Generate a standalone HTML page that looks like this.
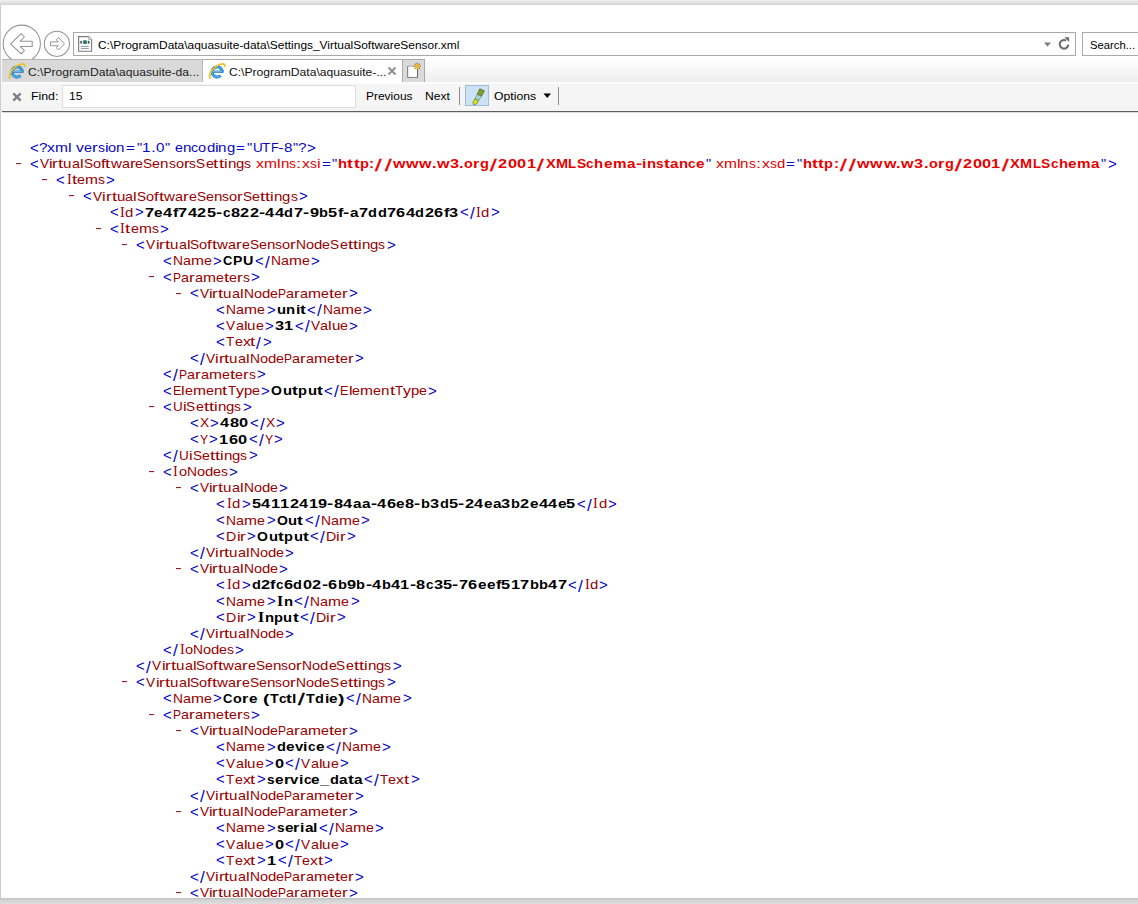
<!DOCTYPE html>
<html><head><meta charset="utf-8"><title>xml</title>
<style>
html,body{margin:0;padding:0;width:1138px;height:904px;overflow:hidden;background:#fff;position:relative}
body{font-family:"Liberation Sans",sans-serif}
#topband{position:absolute;left:0;top:0;width:1138px;height:5px;background:linear-gradient(#f0f0f0,#e2e2e2 50%,#d3d3d3)}
#leftb{position:absolute;left:0;top:5px;width:1px;height:893px;background:#cfcfcf}
#addr{position:absolute;left:73px;top:32px;width:1001px;height:22px;border:1px solid #a9a9a9;background:#fff}
#search{position:absolute;left:1082px;top:32px;width:80px;height:22px;border:1px solid #a9a9a9;background:#fff}
.ui{position:absolute;font-size:11.5px;line-height:0;white-space:pre;color:#000;transform-origin:0 0}
#tabrow{position:absolute;left:1px;top:59px;width:1137px;height:24px;background:linear-gradient(#ffffff 0,#fdfdfd 15%,#eeeeee 95%,#fafafa 100%)}
#tab1{position:absolute;left:2px;top:59px;width:200px;height:22px;background:#d9d9d9;border-top:1px solid #b4b4b4;border-right:1px solid #b8b8b8}
#tab2{position:absolute;left:203px;top:59px;width:199px;height:24px;background:#fff;border-top:1px solid #a9a9a9}
#newtab{position:absolute;left:402px;top:59px;width:21px;height:22px;background:#dadada;border:1px solid #aaaaaa;border-bottom:0}
.ie{position:absolute}
#findbar{position:absolute;left:1px;top:82px;width:1137px;height:27px;background:#f5f5f5;border-top:2px solid #fcfcfc}
#findline{position:absolute;left:2px;top:111px;width:1136px;height:1px;background:#5e5e5e;box-shadow:0 1px 0 #dcdcdc}
#findbox{position:absolute;left:62px;top:85px;width:292px;height:21px;border:1px solid #dcdcdc;background:#fff}
.sep{position:absolute;top:87px;width:1px;height:18px;background:#8a8a8a}
#hlbtn{position:absolute;left:465px;top:85px;width:22px;height:19px;background:#cde2f6;border:1px solid #9fbcd8}
#botbar{position:absolute;left:0;top:898px;width:1138px;height:6px;background:linear-gradient(#c2c2c2,#d4d4d4 40%,#dedede)}
#xml{position:absolute;left:0;top:0}
.ln{position:absolute;height:0;font-size:13.333px;line-height:0;white-space:pre}
.ln span{position:absolute;top:0;transform-origin:0 0}
.m{color:#0808c4}
.n{color:#990000}
.t{color:#000;font-weight:bold}
.av{color:#e80000;font-weight:bold}
.d{position:absolute;width:5px;height:1px;background:#9a1c2a;box-shadow:0 0.5px 0 rgba(180,40,50,0.25)}
.ns{color:#e00000}
.sf{font-family:"Liberation Serif",serif;font-size:13.6px}
.ln span.bs{font-size:16px;top:1.4px;font-weight:normal;-webkit-text-stroke:0.35px currentColor}
.ln span.rs{font-size:16.5px;top:0.2px}
.ln span.ch{font-size:14.5px;top:-0.4px}

</style></head><body>
<div id="topband"></div>
<div id="leftb"></div>
<!-- nav buttons -->
<svg id="nav" width="75" height="59" style="position:absolute;left:0;top:0">
  <circle cx="21.8" cy="43.75" r="18.6" fill="#fff" stroke="#939393" stroke-width="1.05"/>
  <path d="M10.6 43.8 L21.1 33.6 L24.4 37 L20.2 41.2 L32.2 41.2 L32.2 46.4 L20.2 46.4 L24.4 50.6 L21.1 53.9 Z" fill="#fff" stroke="#939393" stroke-width="1.05" stroke-linejoin="round"/>
  <circle cx="56.9" cy="43.8" r="12.6" fill="#fff" stroke="#939393" stroke-width="1.05"/>
  <path d="M64.5 43.8 L58.5 37.6 L56.3 39.8 L58.3 41.9 L50.5 41.9 L50.5 45.7 L58.3 45.7 L56.3 47.8 L58.5 50 Z" fill="#fff" stroke="#939393" stroke-width="1.0" stroke-linejoin="round"/>
</svg>
<div id="addr"></div>
<svg style="position:absolute;left:77px;top:35px" width="16" height="18">
  <path d="M1.6 1.6 H11.6 L14.6 4.6 V16.3 H1.6 Z" fill="#fff" stroke="#7c7c7c" stroke-width="1.1"/>
  <path d="M11.6 1.6 V4.6 H14.6" fill="#e4e4e4" stroke="#a8a8a8" stroke-width="0.8"/>
  <path d="M4.8 6 L3.4 7.3 L4.8 8.6 M10.9 6 L12.3 7.3 L10.9 8.6" fill="none" stroke="#4c4c4c" stroke-width="1.2"/>
  <circle cx="8" cy="7.2" r="2.1" fill="#2e7b6a"/>
  <path d="M4 11.5 H11.8 M4 13.5 H11.8" stroke="#8a8ab0" stroke-width="0.9"/>
</svg>
<div class="ui" style="left:98px;top:44.5px;transform:scaleX(1.038)">C:\ProgramData\aquasuite-data\Settings_VirtualSoftwareSensor.xml</div>
<svg style="position:absolute;left:1040px;top:35px" width="32" height="18">
  <path d="M4 7.5 H11 L7.5 11.5 Z" fill="#7a7a7a"/>
  <path d="M28.28 9.67 A4.3 4.3 0 1 1 26.15 5.58" fill="none" stroke="#6e6e6e" stroke-width="2.1"/>
  <path d="M24.3 2.3 L29.1 2.3 L29.1 7.1 Z" fill="#6e6e6e"/>
</svg>
<div id="search"></div>
<div class="ui" style="left:1090px;top:44.5px;transform:scaleX(0.98)">Search...</div>

<!-- tabs -->
<div id="tabrow"></div>
<div id="tab1"></div>
<div id="tab2"></div>
<div id="newtab"></div>
<svg class="ie" style="left:7px;top:62px" width="20" height="19" viewBox="0 0 20 19">
  <path d="M15.20 10.66 A5.1 5.1 0 1 0 13.56 13.74" fill="none" stroke="#1a72c0" stroke-width="3"/>
  <path d="M15.20 10.66 A5.1 5.1 0 1 0 13.56 13.74" fill="none" stroke="#4fb6ee" stroke-width="1.4"/>
  <path d="M5.4 9.7 H15.6" stroke="#1a72c0" stroke-width="2.2"/>
  <path d="M6 9.7 H15" stroke="#7fd4f8" stroke-width="0.9"/>
  <path d="M3.6 16.6 Q0.6 14.5 5.2 8 Q9.5 2.5 15.6 1.8 Q18.6 1.8 17.4 5.2" fill="none" stroke="#f0c02a" stroke-width="1.8"/>
</svg>
<div class="ui" style="left:28.3px;top:71.5px;color:#222;transform:scaleX(1.054)">C:\ProgramData\aquasuite-da...</div>
<svg class="ie" style="left:207px;top:62px" width="20" height="19" viewBox="0 0 20 19">
  <path d="M15.20 10.66 A5.1 5.1 0 1 0 13.56 13.74" fill="none" stroke="#1a72c0" stroke-width="3"/>
  <path d="M15.20 10.66 A5.1 5.1 0 1 0 13.56 13.74" fill="none" stroke="#4fb6ee" stroke-width="1.4"/>
  <path d="M5.4 9.7 H15.6" stroke="#1a72c0" stroke-width="2.2"/>
  <path d="M6 9.7 H15" stroke="#7fd4f8" stroke-width="0.9"/>
  <path d="M3.6 16.6 Q0.6 14.5 5.2 8 Q9.5 2.5 15.6 1.8 Q18.6 1.8 17.4 5.2" fill="none" stroke="#f0c02a" stroke-width="1.8"/>
</svg>
<div class="ui" style="left:228.5px;top:71.5px;color:#111;transform:scaleX(1.052)">C:\ProgramData\aquasuite-...</div>
<svg style="position:absolute;left:387px;top:66px" width="10" height="10">
  <path d="M1.5 1.5 L8.5 8.5 M8.5 1.5 L1.5 8.5" stroke="#8c8c8c" stroke-width="1.8"/>
</svg>
<svg style="position:absolute;left:404px;top:62px" width="18" height="18">
  <path d="M3.8 4.2 V15.3 H13.5 V7" fill="#fff" stroke="#6a6a6a" stroke-width="1.1"/>
  <path d="M3.8 4.2 H10" fill="none" stroke="#a0a0a0" stroke-width="0.9"/>
  <rect x="4.4" y="4.8" width="8.5" height="10" fill="#fff"/>
  <g fill="#8a6a2a"><circle cx="13.3" cy="1.3" r="0.7"/><circle cx="15.4" cy="2.2" r="0.7"/><circle cx="16.3" cy="4.3" r="0.7"/><circle cx="15.4" cy="6.4" r="0.7"/><circle cx="13.3" cy="7.3" r="0.7"/><circle cx="11.2" cy="6.4" r="0.7"/><circle cx="10.3" cy="4.3" r="0.7"/><circle cx="11.2" cy="2.2" r="0.7"/></g>
  <circle cx="13.3" cy="4.3" r="2.3" fill="#f2b41c"/>
</svg>

<!-- find bar -->
<div id="findbar"></div>
<svg style="position:absolute;left:11.5px;top:92px" width="10" height="10">
  <path d="M1.3 1.3 L8.7 8.7 M8.7 1.3 L1.3 8.7" stroke="#808080" stroke-width="2.4"/>
</svg>
<div class="ui" style="left:31.2px;top:96px;transform:scaleX(1.07)">Find:</div>
<div id="findbox"></div>
<div class="ui" style="left:68.5px;top:96px;transform:scaleX(1.05)">15</div>
<div class="ui" style="left:366.3px;top:96px;transform:scaleX(1.04)">Previous</div>
<div class="ui" style="left:425.4px;top:96px;transform:scaleX(1.05)">Next</div>
<div class="sep" style="left:459px"></div>
<div id="hlbtn"></div>
<svg style="position:absolute;left:462px;top:82px" width="30" height="26">
  <path d="M17.8 6.8 L22.3 8.8 L19.6 14.2 L15.2 12.4 Z" fill="#7f9e2a" stroke="#52701a" stroke-width="0.8"/>
  <path d="M15.2 12.4 L19.6 14.2 L16.6 18.6 L12.8 17 Z" fill="#a9d6c8" stroke="#4e7a6a" stroke-width="0.6"/>
  <path d="M12.8 17 L16.6 18.6 L14.6 22 L11.6 22.8 L10.8 20.5 Z" fill="#d6e22a" stroke="#6a7a10" stroke-width="0.7"/>
</svg>
<div class="ui" style="left:494.4px;top:96px;transform:scaleX(1.065)">Options</div>
<svg style="position:absolute;left:542px;top:92px" width="10" height="7">
  <path d="M1.5 1.5 H9 L5.25 6 Z" fill="#000"/>
</svg>
<div class="sep" style="left:558px"></div>
<div id="findline"></div>
<div id="botbar"></div>

<div id="xml">
<div class="ln" style="left:28.56px;top:148.0px"><span class="m ch" style="left:1.22px;transform:scaleX(1.0299)">&lt;</span><span class="m" style="left:10.55px;transform:scaleX(1.1500)">?</span><span class="m" style="left:18.45px;transform:scaleX(1.1830)">x</span><span class="m" style="left:26.35px;transform:scaleX(1.1678)">m</span><span class="m" style="left:39.32px;transform:scaleX(1.2306)">l</span><span class="m" style="left:47.67px;transform:scaleX(1.1830)">v</span><span class="m" style="left:55.56px;transform:scaleX(1.0707)">e</span><span class="m" style="left:63.51px;transform:scaleX(1.2785)">r</span><span class="m" style="left:69.20px;transform:scaleX(1.0412)">s</span><span class="m" style="left:76.14px;transform:scaleX(1.2306)">i</span><span class="m" style="left:79.80px;transform:scaleX(1.0904)">o</span><span class="m" style="left:87.89px;transform:scaleX(1.1372)">n</span><span class="m" style="left:97.47px;transform:scaleX(1.1400)">=</span><span class="m" style="left:108.03px;transform:scaleX(1.1000)">"</span><span class="m" style="left:113.77px;transform:scaleX(1.1425)">1</span><span class="m" style="left:122.25px;transform:scaleX(1.3106)">.</span><span class="m" style="left:127.10px;transform:scaleX(1.1425)">0</span><span class="m" style="left:136.11px;transform:scaleX(1.1000)">"</span><span class="m" style="left:146.54px;transform:scaleX(1.0707)">e</span><span class="m" style="left:154.49px;transform:scaleX(1.1372)">n</span><span class="m" style="left:162.93px;transform:scaleX(1.0412)">c</span><span class="m" style="left:169.88px;transform:scaleX(1.0904)">o</span><span class="m" style="left:177.97px;transform:scaleX(1.1192)">d</span><span class="m" style="left:186.28px;transform:scaleX(1.2306)">i</span><span class="m" style="left:189.93px;transform:scaleX(1.1372)">n</span><span class="m" style="left:198.37px;transform:scaleX(1.1192)">g</span><span class="m" style="left:207.82px;transform:scaleX(1.1400)">=</span><span class="m" style="left:218.38px;transform:scaleX(1.1000)">"</span><span class="m" style="left:224.11px;transform:scaleX(1.0124)">U</span><span class="m" style="left:233.87px;transform:scaleX(1.0070)">T</span><span class="m" style="left:242.09px;transform:scaleX(0.9400)">F</span><span class="m" style="left:249.75px;transform:scaleX(1.2904)">-</span><span class="m" style="left:255.50px;transform:scaleX(1.1425)">8</span><span class="m" style="left:264.51px;transform:scaleX(1.1000)">"</span><span class="m" style="left:269.62px;transform:scaleX(1.1500)">?</span><span class="m ch" style="left:278.75px;transform:scaleX(1.0299)">&gt;</span></div>
<i class="d" style="left:15.8px;top:163px"></i>
<div class="ln" style="left:28.56px;top:164.2px"><span class="m ch" style="left:1.22px;transform:scaleX(1.0299)">&lt;</span><span class="n" style="left:11.17px;transform:scaleX(1.0258)">V</span><span class="n" style="left:20.29px;transform:scaleX(1.2306)">i</span><span class="n" style="left:23.95px;transform:scaleX(1.2785)">r</span><span class="n" style="left:29.67px;transform:scaleX(1.4000)">t</span><span class="n" style="left:34.89px;transform:scaleX(1.1372)">u</span><span class="n" style="left:43.33px;transform:scaleX(1.0779)">a</span><span class="n" style="left:51.33px;transform:scaleX(1.2306)">l</span><span class="n" style="left:54.99px;transform:scaleX(1.0243)">S</span><span class="n" style="left:64.09px;transform:scaleX(1.0904)">o</span><span class="n" style="left:72.18px;transform:scaleX(1.2674)">f</span><span class="n" style="left:76.91px;transform:scaleX(1.4000)">t</span><span class="n" style="left:82.13px;transform:scaleX(1.1313)">w</span><span class="n" style="left:93.04px;transform:scaleX(1.0779)">a</span><span class="n" style="left:101.04px;transform:scaleX(1.2785)">r</span><span class="n" style="left:106.73px;transform:scaleX(1.0707)">e</span><span class="n" style="left:114.68px;transform:scaleX(1.0243)">S</span><span class="n" style="left:123.78px;transform:scaleX(1.0707)">e</span><span class="n" style="left:131.73px;transform:scaleX(1.1372)">n</span><span class="n" style="left:140.17px;transform:scaleX(1.0412)">s</span><span class="n" style="left:147.12px;transform:scaleX(1.0904)">o</span><span class="n" style="left:155.21px;transform:scaleX(1.2785)">r</span><span class="n" style="left:160.90px;transform:scaleX(1.0412)">s</span><span class="n" style="left:167.85px;transform:scaleX(1.0243)">S</span><span class="n" style="left:176.96px;transform:scaleX(1.0707)">e</span><span class="n" style="left:184.94px;transform:scaleX(1.4000)">t</span><span class="n" style="left:190.19px;transform:scaleX(1.4000)">t</span><span class="n" style="left:195.41px;transform:scaleX(1.2306)">i</span><span class="n" style="left:199.06px;transform:scaleX(1.1372)">n</span><span class="n" style="left:207.50px;transform:scaleX(1.1192)">g</span><span class="n" style="left:215.81px;transform:scaleX(1.0412)">s</span><span class="ns" style="left:227.45px;transform:scaleX(1.1830)">x</span><span class="ns" style="left:235.34px;transform:scaleX(1.1678)">m</span><span class="ns" style="left:248.31px;transform:scaleX(1.2306)">l</span><span class="ns" style="left:251.97px;transform:scaleX(1.1372)">n</span><span class="ns" style="left:260.41px;transform:scaleX(1.0412)">s</span><span class="ns" style="left:267.79px;transform:scaleX(1.4000)">:</span><span class="ns" style="left:273.41px;transform:scaleX(1.1830)">x</span><span class="ns" style="left:281.30px;transform:scaleX(1.0412)">s</span><span class="ns" style="left:288.25px;transform:scaleX(1.2306)">i</span><span class="m" style="left:293.04px;transform:scaleX(1.1400)">=</span><span class="m" style="left:303.60px;transform:scaleX(1.1000)">"</span><span class="av" style="left:309.53px;transform:scaleX(1.1173)">h</span><span class="av" style="left:318.95px;transform:scaleX(1.3107)">t</span><span class="av" style="left:325.03px;transform:scaleX(1.3107)">t</span><span class="av" style="left:331.18px;transform:scaleX(1.0969)">p</span><span class="av" style="left:340.42px;transform:scaleX(1.1497)">:</span><span class="av bs" style="left:346.94px;transform:scaleX(1.4852)">/</span><span class="av bs" style="left:356.12px;transform:scaleX(1.4852)">/</span><span class="av" style="left:364.28px;transform:scaleX(1.2078)">w</span><span class="av" style="left:377.33px;transform:scaleX(1.2078)">w</span><span class="av" style="left:390.38px;transform:scaleX(1.2078)">w</span><span class="av" style="left:403.27px;transform:scaleX(1.2547)">.</span><span class="av" style="left:408.28px;transform:scaleX(1.2078)">w</span><span class="av" style="left:421.26px;transform:scaleX(1.2262)">3</span><span class="av" style="left:430.65px;transform:scaleX(1.2547)">.</span><span class="av" style="left:435.57px;transform:scaleX(1.0781)">o</span><span class="av" style="left:444.68px;transform:scaleX(1.2263)">r</span><span class="av" style="left:451.36px;transform:scaleX(1.0969)">g</span><span class="av bs" style="left:461.79px;transform:scaleX(1.4852)">/</span><span class="av" style="left:469.87px;transform:scaleX(1.2262)">2</span><span class="av" style="left:479.35px;transform:scaleX(1.2262)">0</span><span class="av" style="left:488.83px;transform:scaleX(1.2262)">0</span><span class="av" style="left:498.31px;transform:scaleX(1.2262)">1</span><span class="av bs" style="left:508.89px;transform:scaleX(1.4852)">/</span><span class="av" style="left:516.99px;transform:scaleX(1.0999)">X</span><span class="av" style="left:527.23px;transform:scaleX(1.0899)">M</span><span class="av" style="left:539.76px;transform:scaleX(0.9997)">L</span><span class="av" style="left:548.27px;transform:scaleX(1.0409)">S</span><span class="av" style="left:557.88px;transform:scaleX(1.0141)">c</span><span class="av" style="left:565.75px;transform:scaleX(1.1173)">h</span><span class="av" style="left:575.23px;transform:scaleX(1.1451)">e</span><span class="av" style="left:584.19px;transform:scaleX(1.1419)">m</span><span class="av" style="left:598.19px;transform:scaleX(1.1520)">a</span><span class="av" style="left:607.05px;transform:scaleX(1.3797)">-</span><span class="av" style="left:613.41px;transform:scaleX(1.1821)">i</span><span class="av" style="left:618.07px;transform:scaleX(1.1173)">n</span><span class="av" style="left:627.53px;transform:scaleX(1.0227)">s</span><span class="av" style="left:635.40px;transform:scaleX(1.3107)">t</span><span class="av" style="left:641.54px;transform:scaleX(1.1520)">a</span><span class="av" style="left:650.45px;transform:scaleX(1.1173)">n</span><span class="av" style="left:659.91px;transform:scaleX(1.0141)">c</span><span class="av" style="left:667.77px;transform:scaleX(1.1451)">e</span><span class="m" style="left:676.98px;transform:scaleX(1.1000)">"</span><span class="ns" style="left:687.41px;transform:scaleX(1.1830)">x</span><span class="ns" style="left:695.30px;transform:scaleX(1.1678)">m</span><span class="ns" style="left:708.28px;transform:scaleX(1.2306)">l</span><span class="ns" style="left:711.93px;transform:scaleX(1.1372)">n</span><span class="ns" style="left:720.37px;transform:scaleX(1.0412)">s</span><span class="ns" style="left:727.75px;transform:scaleX(1.4000)">:</span><span class="ns" style="left:733.37px;transform:scaleX(1.1830)">x</span><span class="ns" style="left:741.26px;transform:scaleX(1.0412)">s</span><span class="ns" style="left:748.21px;transform:scaleX(1.1192)">d</span><span class="m" style="left:757.66px;transform:scaleX(1.1400)">=</span><span class="m" style="left:768.22px;transform:scaleX(1.1000)">"</span><span class="av" style="left:774.14px;transform:scaleX(1.1173)">h</span><span class="av" style="left:783.57px;transform:scaleX(1.3107)">t</span><span class="av" style="left:789.65px;transform:scaleX(1.3107)">t</span><span class="av" style="left:795.79px;transform:scaleX(1.0969)">p</span><span class="av" style="left:805.03px;transform:scaleX(1.1497)">:</span><span class="av bs" style="left:811.55px;transform:scaleX(1.4852)">/</span><span class="av bs" style="left:820.74px;transform:scaleX(1.4852)">/</span><span class="av" style="left:828.89px;transform:scaleX(1.2078)">w</span><span class="av" style="left:841.95px;transform:scaleX(1.2078)">w</span><span class="av" style="left:855.00px;transform:scaleX(1.2078)">w</span><span class="av" style="left:867.89px;transform:scaleX(1.2547)">.</span><span class="av" style="left:872.89px;transform:scaleX(1.2078)">w</span><span class="av" style="left:885.87px;transform:scaleX(1.2262)">3</span><span class="av" style="left:895.26px;transform:scaleX(1.2547)">.</span><span class="av" style="left:900.19px;transform:scaleX(1.0781)">o</span><span class="av" style="left:909.30px;transform:scaleX(1.2263)">r</span><span class="av" style="left:915.98px;transform:scaleX(1.0969)">g</span><span class="av bs" style="left:926.40px;transform:scaleX(1.4852)">/</span><span class="av" style="left:934.49px;transform:scaleX(1.2262)">2</span><span class="av" style="left:943.97px;transform:scaleX(1.2262)">0</span><span class="av" style="left:953.45px;transform:scaleX(1.2262)">0</span><span class="av" style="left:962.93px;transform:scaleX(1.2262)">1</span><span class="av bs" style="left:973.51px;transform:scaleX(1.4852)">/</span><span class="av" style="left:981.61px;transform:scaleX(1.0999)">X</span><span class="av" style="left:991.84px;transform:scaleX(1.0899)">M</span><span class="av" style="left:1004.37px;transform:scaleX(0.9997)">L</span><span class="av" style="left:1012.89px;transform:scaleX(1.0409)">S</span><span class="av" style="left:1022.49px;transform:scaleX(1.0141)">c</span><span class="av" style="left:1030.36px;transform:scaleX(1.1173)">h</span><span class="av" style="left:1039.84px;transform:scaleX(1.1451)">e</span><span class="av" style="left:1048.80px;transform:scaleX(1.1419)">m</span><span class="av" style="left:1062.80px;transform:scaleX(1.1520)">a</span><span class="m" style="left:1072.06px;transform:scaleX(1.1000)">"</span><span class="m ch" style="left:1079.02px;transform:scaleX(1.0299)">&gt;</span></div>
<i class="d" style="left:42.4px;top:179px"></i>
<div class="ln" style="left:55.23px;top:180.4px"><span class="m ch" style="left:1.22px;transform:scaleX(1.0299)">&lt;</span><span class="n sf" style="left:11.59px;transform:scaleX(1.0504)">I</span><span class="n" style="left:16.82px;transform:scaleX(1.4000)">t</span><span class="n" style="left:22.04px;transform:scaleX(1.0707)">e</span><span class="n" style="left:29.99px;transform:scaleX(1.1678)">m</span><span class="n" style="left:42.96px;transform:scaleX(1.0412)">s</span><span class="m ch" style="left:51.13px;transform:scaleX(1.0299)">&gt;</span></div>
<i class="d" style="left:69.1px;top:195px"></i>
<div class="ln" style="left:81.89px;top:196.6px"><span class="m ch" style="left:1.22px;transform:scaleX(1.0299)">&lt;</span><span class="n" style="left:11.17px;transform:scaleX(1.0258)">V</span><span class="n" style="left:20.29px;transform:scaleX(1.2306)">i</span><span class="n" style="left:23.95px;transform:scaleX(1.2785)">r</span><span class="n" style="left:29.67px;transform:scaleX(1.4000)">t</span><span class="n" style="left:34.89px;transform:scaleX(1.1372)">u</span><span class="n" style="left:43.33px;transform:scaleX(1.0779)">a</span><span class="n" style="left:51.33px;transform:scaleX(1.2306)">l</span><span class="n" style="left:54.99px;transform:scaleX(1.0243)">S</span><span class="n" style="left:64.09px;transform:scaleX(1.0904)">o</span><span class="n" style="left:72.18px;transform:scaleX(1.2674)">f</span><span class="n" style="left:76.91px;transform:scaleX(1.4000)">t</span><span class="n" style="left:82.13px;transform:scaleX(1.1313)">w</span><span class="n" style="left:93.04px;transform:scaleX(1.0779)">a</span><span class="n" style="left:101.04px;transform:scaleX(1.2785)">r</span><span class="n" style="left:106.73px;transform:scaleX(1.0707)">e</span><span class="n" style="left:114.68px;transform:scaleX(1.0243)">S</span><span class="n" style="left:123.78px;transform:scaleX(1.0707)">e</span><span class="n" style="left:131.73px;transform:scaleX(1.1372)">n</span><span class="n" style="left:140.17px;transform:scaleX(1.0412)">s</span><span class="n" style="left:147.12px;transform:scaleX(1.0904)">o</span><span class="n" style="left:155.21px;transform:scaleX(1.2785)">r</span><span class="n" style="left:160.90px;transform:scaleX(1.0243)">S</span><span class="n" style="left:170.01px;transform:scaleX(1.0707)">e</span><span class="n" style="left:177.99px;transform:scaleX(1.4000)">t</span><span class="n" style="left:183.24px;transform:scaleX(1.4000)">t</span><span class="n" style="left:188.46px;transform:scaleX(1.2306)">i</span><span class="n" style="left:192.12px;transform:scaleX(1.1372)">n</span><span class="n" style="left:200.55px;transform:scaleX(1.1192)">g</span><span class="n" style="left:208.86px;transform:scaleX(1.0412)">s</span><span class="m ch" style="left:217.03px;transform:scaleX(1.0299)">&gt;</span></div>
<div class="ln" style="left:108.56px;top:212.8px"><span class="m ch" style="left:1.22px;transform:scaleX(1.0299)">&lt;</span><span class="n sf" style="left:11.59px;transform:scaleX(1.0504)">I</span><span class="n" style="left:16.79px;transform:scaleX(1.1192)">d</span><span class="m ch" style="left:26.31px;transform:scaleX(1.0299)">&gt;</span><span class="t" style="left:36.46px;transform:scaleX(1.2262)">7</span><span class="t" style="left:45.92px;transform:scaleX(1.1451)">e</span><span class="t" style="left:54.79px;transform:scaleX(1.2262)">4</span><span class="t" style="left:64.19px;transform:scaleX(1.2130)">f</span><span class="t" style="left:69.89px;transform:scaleX(1.2262)">7</span><span class="t" style="left:79.37px;transform:scaleX(1.2262)">4</span><span class="t" style="left:88.85px;transform:scaleX(1.2262)">2</span><span class="t" style="left:98.33px;transform:scaleX(1.2262)">5</span><span class="t" style="left:107.75px;transform:scaleX(1.3797)">-</span><span class="t" style="left:114.18px;transform:scaleX(1.0141)">c</span><span class="t" style="left:122.05px;transform:scaleX(1.2262)">8</span><span class="t" style="left:131.53px;transform:scaleX(1.2262)">2</span><span class="t" style="left:141.01px;transform:scaleX(1.2262)">2</span><span class="t" style="left:150.43px;transform:scaleX(1.3797)">-</span><span class="t" style="left:156.89px;transform:scaleX(1.2262)">4</span><span class="t" style="left:166.37px;transform:scaleX(1.2262)">4</span><span class="t" style="left:175.85px;transform:scaleX(1.0969)">d</span><span class="t" style="left:185.17px;transform:scaleX(1.2262)">7</span><span class="t" style="left:194.59px;transform:scaleX(1.3797)">-</span><span class="t" style="left:201.05px;transform:scaleX(1.2262)">9</span><span class="t" style="left:210.53px;transform:scaleX(1.0969)">b</span><span class="t" style="left:219.85px;transform:scaleX(1.2262)">5</span><span class="t" style="left:229.25px;transform:scaleX(1.2130)">f</span><span class="t" style="left:234.90px;transform:scaleX(1.3797)">-</span><span class="t" style="left:241.35px;transform:scaleX(1.1520)">a</span><span class="t" style="left:250.26px;transform:scaleX(1.2262)">7</span><span class="t" style="left:259.74px;transform:scaleX(1.0969)">d</span><span class="t" style="left:269.06px;transform:scaleX(1.0969)">d</span><span class="t" style="left:278.38px;transform:scaleX(1.2262)">7</span><span class="t" style="left:287.86px;transform:scaleX(1.2262)">6</span><span class="t" style="left:297.34px;transform:scaleX(1.2262)">4</span><span class="t" style="left:306.82px;transform:scaleX(1.0969)">d</span><span class="t" style="left:316.14px;transform:scaleX(1.2262)">2</span><span class="t" style="left:325.62px;transform:scaleX(1.2262)">6</span><span class="t" style="left:335.02px;transform:scaleX(1.2130)">f</span><span class="t" style="left:340.73px;transform:scaleX(1.2262)">3</span><span class="m ch" style="left:351.24px;transform:scaleX(1.0299)">&lt;</span><span class="m rs" style="left:361.22px;transform:scaleX(1.0474)">/</span><span class="n sf" style="left:367.67px;transform:scaleX(1.0504)">I</span><span class="n" style="left:372.86px;transform:scaleX(1.1192)">d</span><span class="m ch" style="left:382.38px;transform:scaleX(1.0299)">&gt;</span></div>
<i class="d" style="left:95.8px;top:228px"></i>
<div class="ln" style="left:108.56px;top:229.0px"><span class="m ch" style="left:1.22px;transform:scaleX(1.0299)">&lt;</span><span class="n sf" style="left:11.59px;transform:scaleX(1.0504)">I</span><span class="n" style="left:16.82px;transform:scaleX(1.4000)">t</span><span class="n" style="left:22.04px;transform:scaleX(1.0707)">e</span><span class="n" style="left:29.99px;transform:scaleX(1.1678)">m</span><span class="n" style="left:42.96px;transform:scaleX(1.0412)">s</span><span class="m ch" style="left:51.13px;transform:scaleX(1.0299)">&gt;</span></div>
<i class="d" style="left:122.4px;top:244px"></i>
<div class="ln" style="left:135.23px;top:245.2px"><span class="m ch" style="left:1.22px;transform:scaleX(1.0299)">&lt;</span><span class="n" style="left:11.17px;transform:scaleX(1.0258)">V</span><span class="n" style="left:20.29px;transform:scaleX(1.2306)">i</span><span class="n" style="left:23.95px;transform:scaleX(1.2785)">r</span><span class="n" style="left:29.67px;transform:scaleX(1.4000)">t</span><span class="n" style="left:34.89px;transform:scaleX(1.1372)">u</span><span class="n" style="left:43.33px;transform:scaleX(1.0779)">a</span><span class="n" style="left:51.33px;transform:scaleX(1.2306)">l</span><span class="n" style="left:54.99px;transform:scaleX(1.0243)">S</span><span class="n" style="left:64.09px;transform:scaleX(1.0904)">o</span><span class="n" style="left:72.18px;transform:scaleX(1.2674)">f</span><span class="n" style="left:76.91px;transform:scaleX(1.4000)">t</span><span class="n" style="left:82.13px;transform:scaleX(1.1313)">w</span><span class="n" style="left:93.04px;transform:scaleX(1.0779)">a</span><span class="n" style="left:101.04px;transform:scaleX(1.2785)">r</span><span class="n" style="left:106.73px;transform:scaleX(1.0707)">e</span><span class="n" style="left:114.68px;transform:scaleX(1.0243)">S</span><span class="n" style="left:123.78px;transform:scaleX(1.0707)">e</span><span class="n" style="left:131.73px;transform:scaleX(1.1372)">n</span><span class="n" style="left:140.17px;transform:scaleX(1.0412)">s</span><span class="n" style="left:147.12px;transform:scaleX(1.0904)">o</span><span class="n" style="left:155.21px;transform:scaleX(1.2785)">r</span><span class="n" style="left:160.90px;transform:scaleX(1.0345)">N</span><span class="n" style="left:170.88px;transform:scaleX(1.0904)">o</span><span class="n" style="left:178.97px;transform:scaleX(1.1192)">d</span><span class="n" style="left:187.28px;transform:scaleX(1.0707)">e</span><span class="n" style="left:195.22px;transform:scaleX(1.0243)">S</span><span class="n" style="left:204.33px;transform:scaleX(1.0707)">e</span><span class="n" style="left:212.31px;transform:scaleX(1.4000)">t</span><span class="n" style="left:217.56px;transform:scaleX(1.4000)">t</span><span class="n" style="left:222.78px;transform:scaleX(1.2306)">i</span><span class="n" style="left:226.43px;transform:scaleX(1.1372)">n</span><span class="n" style="left:234.87px;transform:scaleX(1.1192)">g</span><span class="n" style="left:243.18px;transform:scaleX(1.0412)">s</span><span class="m ch" style="left:251.35px;transform:scaleX(1.0299)">&gt;</span></div>
<div class="ln" style="left:161.90px;top:261.4px"><span class="m ch" style="left:1.22px;transform:scaleX(1.0299)">&lt;</span><span class="n" style="left:11.17px;transform:scaleX(1.0345)">N</span><span class="n" style="left:21.15px;transform:scaleX(1.0779)">a</span><span class="n" style="left:29.15px;transform:scaleX(1.1678)">m</span><span class="n" style="left:42.12px;transform:scaleX(1.0707)">e</span><span class="m ch" style="left:51.29px;transform:scaleX(1.0299)">&gt;</span><span class="t" style="left:61.43px;transform:scaleX(0.9745)">C</span><span class="t" style="left:71.22px;transform:scaleX(1.0553)">P</span><span class="t" style="left:81.01px;transform:scaleX(1.0781)">U</span><span class="m ch" style="left:92.84px;transform:scaleX(1.0299)">&lt;</span><span class="m rs" style="left:102.82px;transform:scaleX(1.0474)">/</span><span class="n" style="left:108.85px;transform:scaleX(1.0345)">N</span><span class="n" style="left:118.82px;transform:scaleX(1.0779)">a</span><span class="n" style="left:126.82px;transform:scaleX(1.1678)">m</span><span class="n" style="left:139.80px;transform:scaleX(1.0707)">e</span><span class="m ch" style="left:148.96px;transform:scaleX(1.0299)">&gt;</span></div>
<i class="d" style="left:149.1px;top:276px"></i>
<div class="ln" style="left:161.90px;top:277.6px"><span class="m ch" style="left:1.22px;transform:scaleX(1.0299)">&lt;</span><span class="n" style="left:11.17px;transform:scaleX(0.9043)">P</span><span class="n" style="left:19.21px;transform:scaleX(1.0779)">a</span><span class="n" style="left:27.21px;transform:scaleX(1.2785)">r</span><span class="n" style="left:32.91px;transform:scaleX(1.0779)">a</span><span class="n" style="left:40.91px;transform:scaleX(1.1678)">m</span><span class="n" style="left:53.88px;transform:scaleX(1.0707)">e</span><span class="n" style="left:61.86px;transform:scaleX(1.4000)">t</span><span class="n" style="left:67.08px;transform:scaleX(1.0707)">e</span><span class="n" style="left:75.02px;transform:scaleX(1.2785)">r</span><span class="n" style="left:80.72px;transform:scaleX(1.0412)">s</span><span class="m ch" style="left:88.88px;transform:scaleX(1.0299)">&gt;</span></div>
<i class="d" style="left:175.8px;top:293px"></i>
<div class="ln" style="left:188.56px;top:293.8px"><span class="m ch" style="left:1.22px;transform:scaleX(1.0299)">&lt;</span><span class="n" style="left:11.17px;transform:scaleX(1.0258)">V</span><span class="n" style="left:20.29px;transform:scaleX(1.2306)">i</span><span class="n" style="left:23.95px;transform:scaleX(1.2785)">r</span><span class="n" style="left:29.67px;transform:scaleX(1.4000)">t</span><span class="n" style="left:34.89px;transform:scaleX(1.1372)">u</span><span class="n" style="left:43.33px;transform:scaleX(1.0779)">a</span><span class="n" style="left:51.33px;transform:scaleX(1.2306)">l</span><span class="n" style="left:54.99px;transform:scaleX(1.0345)">N</span><span class="n" style="left:64.96px;transform:scaleX(1.0904)">o</span><span class="n" style="left:73.05px;transform:scaleX(1.1192)">d</span><span class="n" style="left:81.36px;transform:scaleX(1.0707)">e</span><span class="n" style="left:89.30px;transform:scaleX(0.9043)">P</span><span class="n" style="left:97.34px;transform:scaleX(1.0779)">a</span><span class="n" style="left:105.34px;transform:scaleX(1.2785)">r</span><span class="n" style="left:111.04px;transform:scaleX(1.0779)">a</span><span class="n" style="left:119.04px;transform:scaleX(1.1678)">m</span><span class="n" style="left:132.01px;transform:scaleX(1.0707)">e</span><span class="n" style="left:139.99px;transform:scaleX(1.4000)">t</span><span class="n" style="left:145.21px;transform:scaleX(1.0707)">e</span><span class="n" style="left:153.16px;transform:scaleX(1.2785)">r</span><span class="m ch" style="left:160.07px;transform:scaleX(1.0299)">&gt;</span></div>
<div class="ln" style="left:215.23px;top:310.0px"><span class="m ch" style="left:1.22px;transform:scaleX(1.0299)">&lt;</span><span class="n" style="left:11.17px;transform:scaleX(1.0345)">N</span><span class="n" style="left:21.15px;transform:scaleX(1.0779)">a</span><span class="n" style="left:29.15px;transform:scaleX(1.1678)">m</span><span class="n" style="left:42.12px;transform:scaleX(1.0707)">e</span><span class="m ch" style="left:51.29px;transform:scaleX(1.0299)">&gt;</span><span class="t" style="left:61.43px;transform:scaleX(1.1173)">u</span><span class="t" style="left:70.92px;transform:scaleX(1.1173)">n</span><span class="t" style="left:80.32px;transform:scaleX(1.1821)">i</span><span class="t" style="left:84.91px;transform:scaleX(1.3107)">t</span><span class="m ch" style="left:92.08px;transform:scaleX(1.0299)">&lt;</span><span class="m rs" style="left:102.06px;transform:scaleX(1.0474)">/</span><span class="n" style="left:108.09px;transform:scaleX(1.0345)">N</span><span class="n" style="left:118.06px;transform:scaleX(1.0779)">a</span><span class="n" style="left:126.06px;transform:scaleX(1.1678)">m</span><span class="n" style="left:139.04px;transform:scaleX(1.0707)">e</span><span class="m ch" style="left:148.20px;transform:scaleX(1.0299)">&gt;</span></div>
<div class="ln" style="left:215.23px;top:326.2px"><span class="m ch" style="left:1.22px;transform:scaleX(1.0299)">&lt;</span><span class="n" style="left:11.17px;transform:scaleX(1.0258)">V</span><span class="n" style="left:20.29px;transform:scaleX(1.0779)">a</span><span class="n" style="left:28.29px;transform:scaleX(1.2306)">l</span><span class="n" style="left:31.95px;transform:scaleX(1.1372)">u</span><span class="n" style="left:40.39px;transform:scaleX(1.0707)">e</span><span class="m ch" style="left:49.55px;transform:scaleX(1.0299)">&gt;</span><span class="t" style="left:59.69px;transform:scaleX(1.2262)">3</span><span class="t" style="left:69.17px;transform:scaleX(1.2262)">1</span><span class="m ch" style="left:79.68px;transform:scaleX(1.0299)">&lt;</span><span class="m rs" style="left:89.66px;transform:scaleX(1.0474)">/</span><span class="n" style="left:95.69px;transform:scaleX(1.0258)">V</span><span class="n" style="left:104.81px;transform:scaleX(1.0779)">a</span><span class="n" style="left:112.81px;transform:scaleX(1.2306)">l</span><span class="n" style="left:116.46px;transform:scaleX(1.1372)">u</span><span class="n" style="left:124.90px;transform:scaleX(1.0707)">e</span><span class="m ch" style="left:134.07px;transform:scaleX(1.0299)">&gt;</span></div>
<div class="ln" style="left:215.23px;top:342.4px"><span class="m ch" style="left:1.22px;transform:scaleX(1.0299)">&lt;</span><span class="n" style="left:11.17px;transform:scaleX(1.0070)">T</span><span class="n" style="left:19.39px;transform:scaleX(1.0707)">e</span><span class="n" style="left:27.33px;transform:scaleX(1.1830)">x</span><span class="n" style="left:35.26px;transform:scaleX(1.4000)">t</span><span class="m rs" style="left:40.51px;transform:scaleX(1.0474)">/</span><span class="m ch" style="left:47.75px;transform:scaleX(1.0299)">&gt;</span></div>
<div class="ln" style="left:188.56px;top:358.6px"><span class="m ch" style="left:1.22px;transform:scaleX(1.0299)">&lt;</span><span class="m rs" style="left:11.20px;transform:scaleX(1.0474)">/</span><span class="n" style="left:17.23px;transform:scaleX(1.0258)">V</span><span class="n" style="left:26.35px;transform:scaleX(1.2306)">i</span><span class="n" style="left:30.00px;transform:scaleX(1.2785)">r</span><span class="n" style="left:35.73px;transform:scaleX(1.4000)">t</span><span class="n" style="left:40.95px;transform:scaleX(1.1372)">u</span><span class="n" style="left:49.39px;transform:scaleX(1.0779)">a</span><span class="n" style="left:57.39px;transform:scaleX(1.2306)">l</span><span class="n" style="left:61.04px;transform:scaleX(1.0345)">N</span><span class="n" style="left:71.01px;transform:scaleX(1.0904)">o</span><span class="n" style="left:79.10px;transform:scaleX(1.1192)">d</span><span class="n" style="left:87.41px;transform:scaleX(1.0707)">e</span><span class="n" style="left:95.36px;transform:scaleX(0.9043)">P</span><span class="n" style="left:103.40px;transform:scaleX(1.0779)">a</span><span class="n" style="left:111.40px;transform:scaleX(1.2785)">r</span><span class="n" style="left:117.09px;transform:scaleX(1.0779)">a</span><span class="n" style="left:125.09px;transform:scaleX(1.1678)">m</span><span class="n" style="left:138.06px;transform:scaleX(1.0707)">e</span><span class="n" style="left:146.04px;transform:scaleX(1.4000)">t</span><span class="n" style="left:151.26px;transform:scaleX(1.0707)">e</span><span class="n" style="left:159.21px;transform:scaleX(1.2785)">r</span><span class="m ch" style="left:166.12px;transform:scaleX(1.0299)">&gt;</span></div>
<div class="ln" style="left:161.90px;top:374.8px"><span class="m ch" style="left:1.22px;transform:scaleX(1.0299)">&lt;</span><span class="m rs" style="left:11.20px;transform:scaleX(1.0474)">/</span><span class="n" style="left:17.23px;transform:scaleX(0.9043)">P</span><span class="n" style="left:25.27px;transform:scaleX(1.0779)">a</span><span class="n" style="left:33.27px;transform:scaleX(1.2785)">r</span><span class="n" style="left:38.96px;transform:scaleX(1.0779)">a</span><span class="n" style="left:46.96px;transform:scaleX(1.1678)">m</span><span class="n" style="left:59.93px;transform:scaleX(1.0707)">e</span><span class="n" style="left:67.91px;transform:scaleX(1.4000)">t</span><span class="n" style="left:73.13px;transform:scaleX(1.0707)">e</span><span class="n" style="left:81.08px;transform:scaleX(1.2785)">r</span><span class="n" style="left:86.77px;transform:scaleX(1.0412)">s</span><span class="m ch" style="left:94.94px;transform:scaleX(1.0299)">&gt;</span></div>
<div class="ln" style="left:161.90px;top:391.0px"><span class="m ch" style="left:1.22px;transform:scaleX(1.0299)">&lt;</span><span class="n" style="left:11.17px;transform:scaleX(0.9478)">E</span><span class="n" style="left:19.60px;transform:scaleX(1.2306)">l</span><span class="n" style="left:23.25px;transform:scaleX(1.0707)">e</span><span class="n" style="left:31.20px;transform:scaleX(1.1678)">m</span><span class="n" style="left:44.17px;transform:scaleX(1.0707)">e</span><span class="n" style="left:52.12px;transform:scaleX(1.1372)">n</span><span class="n" style="left:60.59px;transform:scaleX(1.4000)">t</span><span class="n" style="left:65.81px;transform:scaleX(1.0070)">T</span><span class="n" style="left:74.02px;transform:scaleX(1.1830)">y</span><span class="n" style="left:81.92px;transform:scaleX(1.1192)">p</span><span class="n" style="left:90.22px;transform:scaleX(1.0707)">e</span><span class="m ch" style="left:99.39px;transform:scaleX(1.0299)">&gt;</span><span class="t" style="left:109.57px;transform:scaleX(1.0486)">O</span><span class="t" style="left:120.87px;transform:scaleX(1.1173)">u</span><span class="t" style="left:130.29px;transform:scaleX(1.3107)">t</span><span class="t" style="left:136.44px;transform:scaleX(1.0969)">p</span><span class="t" style="left:145.76px;transform:scaleX(1.1173)">u</span><span class="t" style="left:155.18px;transform:scaleX(1.3107)">t</span><span class="m ch" style="left:162.36px;transform:scaleX(1.0299)">&lt;</span><span class="m rs" style="left:172.34px;transform:scaleX(1.0474)">/</span><span class="n" style="left:178.37px;transform:scaleX(0.9478)">E</span><span class="n" style="left:186.80px;transform:scaleX(1.2306)">l</span><span class="n" style="left:190.45px;transform:scaleX(1.0707)">e</span><span class="n" style="left:198.40px;transform:scaleX(1.1678)">m</span><span class="n" style="left:211.37px;transform:scaleX(1.0707)">e</span><span class="n" style="left:219.31px;transform:scaleX(1.1372)">n</span><span class="n" style="left:227.79px;transform:scaleX(1.4000)">t</span><span class="n" style="left:233.01px;transform:scaleX(1.0070)">T</span><span class="n" style="left:241.22px;transform:scaleX(1.1830)">y</span><span class="n" style="left:249.11px;transform:scaleX(1.1192)">p</span><span class="n" style="left:257.42px;transform:scaleX(1.0707)">e</span><span class="m ch" style="left:266.59px;transform:scaleX(1.0299)">&gt;</span></div>
<i class="d" style="left:149.1px;top:406px"></i>
<div class="ln" style="left:161.90px;top:407.2px"><span class="m ch" style="left:1.22px;transform:scaleX(1.0299)">&lt;</span><span class="n" style="left:11.17px;transform:scaleX(1.0124)">U</span><span class="n" style="left:20.93px;transform:scaleX(1.2306)">i</span><span class="n" style="left:24.59px;transform:scaleX(1.0243)">S</span><span class="n" style="left:33.69px;transform:scaleX(1.0707)">e</span><span class="n" style="left:41.67px;transform:scaleX(1.4000)">t</span><span class="n" style="left:46.93px;transform:scaleX(1.4000)">t</span><span class="n" style="left:52.15px;transform:scaleX(1.2306)">i</span><span class="n" style="left:55.80px;transform:scaleX(1.1372)">n</span><span class="n" style="left:64.24px;transform:scaleX(1.1192)">g</span><span class="n" style="left:72.54px;transform:scaleX(1.0412)">s</span><span class="m ch" style="left:80.71px;transform:scaleX(1.0299)">&gt;</span></div>
<div class="ln" style="left:188.56px;top:423.4px"><span class="m ch" style="left:1.22px;transform:scaleX(1.0299)">&lt;</span><span class="n" style="left:11.17px;transform:scaleX(1.0273)">X</span><span class="m ch" style="left:21.53px;transform:scaleX(1.0299)">&gt;</span><span class="t" style="left:31.67px;transform:scaleX(1.2262)">4</span><span class="t" style="left:41.15px;transform:scaleX(1.2262)">8</span><span class="t" style="left:50.63px;transform:scaleX(1.2262)">0</span><span class="m ch" style="left:61.14px;transform:scaleX(1.0299)">&lt;</span><span class="m rs" style="left:71.12px;transform:scaleX(1.0474)">/</span><span class="n" style="left:77.14px;transform:scaleX(1.0273)">X</span><span class="m ch" style="left:87.50px;transform:scaleX(1.0299)">&gt;</span></div>
<div class="ln" style="left:188.56px;top:439.6px"><span class="m ch" style="left:1.22px;transform:scaleX(1.0299)">&lt;</span><span class="n" style="left:11.17px;transform:scaleX(0.9223)">Y</span><span class="m ch" style="left:20.59px;transform:scaleX(1.0299)">&gt;</span><span class="t" style="left:30.74px;transform:scaleX(1.2262)">1</span><span class="t" style="left:40.22px;transform:scaleX(1.2262)">6</span><span class="t" style="left:49.70px;transform:scaleX(1.2262)">0</span><span class="m ch" style="left:60.21px;transform:scaleX(1.0299)">&lt;</span><span class="m rs" style="left:70.18px;transform:scaleX(1.0474)">/</span><span class="n" style="left:76.21px;transform:scaleX(0.9223)">Y</span><span class="m ch" style="left:85.63px;transform:scaleX(1.0299)">&gt;</span></div>
<div class="ln" style="left:161.90px;top:455.8px"><span class="m ch" style="left:1.22px;transform:scaleX(1.0299)">&lt;</span><span class="m rs" style="left:11.20px;transform:scaleX(1.0474)">/</span><span class="n" style="left:17.23px;transform:scaleX(1.0124)">U</span><span class="n" style="left:26.99px;transform:scaleX(1.2306)">i</span><span class="n" style="left:30.64px;transform:scaleX(1.0243)">S</span><span class="n" style="left:39.75px;transform:scaleX(1.0707)">e</span><span class="n" style="left:47.73px;transform:scaleX(1.4000)">t</span><span class="n" style="left:52.98px;transform:scaleX(1.4000)">t</span><span class="n" style="left:58.20px;transform:scaleX(1.2306)">i</span><span class="n" style="left:61.85px;transform:scaleX(1.1372)">n</span><span class="n" style="left:70.29px;transform:scaleX(1.1192)">g</span><span class="n" style="left:78.60px;transform:scaleX(1.0412)">s</span><span class="m ch" style="left:86.76px;transform:scaleX(1.0299)">&gt;</span></div>
<i class="d" style="left:149.1px;top:471px"></i>
<div class="ln" style="left:161.90px;top:472.0px"><span class="m ch" style="left:1.22px;transform:scaleX(1.0299)">&lt;</span><span class="n sf" style="left:11.59px;transform:scaleX(1.0504)">I</span><span class="n" style="left:16.79px;transform:scaleX(1.0904)">o</span><span class="n" style="left:24.88px;transform:scaleX(1.0345)">N</span><span class="n" style="left:34.85px;transform:scaleX(1.0904)">o</span><span class="n" style="left:42.95px;transform:scaleX(1.1192)">d</span><span class="n" style="left:51.25px;transform:scaleX(1.0707)">e</span><span class="n" style="left:59.20px;transform:scaleX(1.0412)">s</span><span class="m ch" style="left:67.37px;transform:scaleX(1.0299)">&gt;</span></div>
<i class="d" style="left:175.8px;top:487px"></i>
<div class="ln" style="left:188.56px;top:488.2px"><span class="m ch" style="left:1.22px;transform:scaleX(1.0299)">&lt;</span><span class="n" style="left:11.17px;transform:scaleX(1.0258)">V</span><span class="n" style="left:20.29px;transform:scaleX(1.2306)">i</span><span class="n" style="left:23.95px;transform:scaleX(1.2785)">r</span><span class="n" style="left:29.67px;transform:scaleX(1.4000)">t</span><span class="n" style="left:34.89px;transform:scaleX(1.1372)">u</span><span class="n" style="left:43.33px;transform:scaleX(1.0779)">a</span><span class="n" style="left:51.33px;transform:scaleX(1.2306)">l</span><span class="n" style="left:54.99px;transform:scaleX(1.0345)">N</span><span class="n" style="left:64.96px;transform:scaleX(1.0904)">o</span><span class="n" style="left:73.05px;transform:scaleX(1.1192)">d</span><span class="n" style="left:81.36px;transform:scaleX(1.0707)">e</span><span class="m ch" style="left:90.52px;transform:scaleX(1.0299)">&gt;</span></div>
<div class="ln" style="left:215.23px;top:504.4px"><span class="m ch" style="left:1.22px;transform:scaleX(1.0299)">&lt;</span><span class="n sf" style="left:11.59px;transform:scaleX(1.0504)">I</span><span class="n" style="left:16.79px;transform:scaleX(1.1192)">d</span><span class="m ch" style="left:26.31px;transform:scaleX(1.0299)">&gt;</span><span class="t" style="left:36.46px;transform:scaleX(1.2262)">5</span><span class="t" style="left:45.94px;transform:scaleX(1.2262)">4</span><span class="t" style="left:55.41px;transform:scaleX(1.2262)">1</span><span class="t" style="left:64.89px;transform:scaleX(1.2262)">1</span><span class="t" style="left:74.37px;transform:scaleX(1.2262)">2</span><span class="t" style="left:83.85px;transform:scaleX(1.2262)">4</span><span class="t" style="left:93.33px;transform:scaleX(1.2262)">1</span><span class="t" style="left:102.81px;transform:scaleX(1.2262)">9</span><span class="t" style="left:112.23px;transform:scaleX(1.3797)">-</span><span class="t" style="left:118.69px;transform:scaleX(1.2262)">8</span><span class="t" style="left:128.17px;transform:scaleX(1.2262)">4</span><span class="t" style="left:137.64px;transform:scaleX(1.1520)">a</span><span class="t" style="left:146.55px;transform:scaleX(1.1520)">a</span><span class="t" style="left:155.40px;transform:scaleX(1.3797)">-</span><span class="t" style="left:161.87px;transform:scaleX(1.2262)">4</span><span class="t" style="left:171.35px;transform:scaleX(1.2262)">6</span><span class="t" style="left:180.81px;transform:scaleX(1.1451)">e</span><span class="t" style="left:189.68px;transform:scaleX(1.2262)">8</span><span class="t" style="left:199.10px;transform:scaleX(1.3797)">-</span><span class="t" style="left:205.55px;transform:scaleX(1.0969)">b</span><span class="t" style="left:214.88px;transform:scaleX(1.2262)">3</span><span class="t" style="left:224.35px;transform:scaleX(1.0969)">d</span><span class="t" style="left:233.68px;transform:scaleX(1.2262)">5</span><span class="t" style="left:243.10px;transform:scaleX(1.3797)">-</span><span class="t" style="left:249.56px;transform:scaleX(1.2262)">2</span><span class="t" style="left:259.04px;transform:scaleX(1.2262)">4</span><span class="t" style="left:268.50px;transform:scaleX(1.1451)">e</span><span class="t" style="left:277.36px;transform:scaleX(1.1520)">a</span><span class="t" style="left:286.28px;transform:scaleX(1.2262)">3</span><span class="t" style="left:295.75px;transform:scaleX(1.0969)">b</span><span class="t" style="left:305.08px;transform:scaleX(1.2262)">2</span><span class="t" style="left:314.54px;transform:scaleX(1.1451)">e</span><span class="t" style="left:323.41px;transform:scaleX(1.2262)">4</span><span class="t" style="left:332.89px;transform:scaleX(1.2262)">4</span><span class="t" style="left:342.36px;transform:scaleX(1.1451)">e</span><span class="t" style="left:351.22px;transform:scaleX(1.2262)">5</span><span class="m ch" style="left:361.73px;transform:scaleX(1.0299)">&lt;</span><span class="m rs" style="left:371.71px;transform:scaleX(1.0474)">/</span><span class="n sf" style="left:378.16px;transform:scaleX(1.0504)">I</span><span class="n" style="left:383.35px;transform:scaleX(1.1192)">d</span><span class="m ch" style="left:392.88px;transform:scaleX(1.0299)">&gt;</span></div>
<div class="ln" style="left:215.23px;top:520.6px"><span class="m ch" style="left:1.22px;transform:scaleX(1.0299)">&lt;</span><span class="n" style="left:11.17px;transform:scaleX(1.0345)">N</span><span class="n" style="left:21.15px;transform:scaleX(1.0779)">a</span><span class="n" style="left:29.15px;transform:scaleX(1.1678)">m</span><span class="n" style="left:42.12px;transform:scaleX(1.0707)">e</span><span class="m ch" style="left:51.29px;transform:scaleX(1.0299)">&gt;</span><span class="t" style="left:61.47px;transform:scaleX(1.0486)">O</span><span class="t" style="left:72.76px;transform:scaleX(1.1173)">u</span><span class="t" style="left:82.19px;transform:scaleX(1.3107)">t</span><span class="m ch" style="left:89.36px;transform:scaleX(1.0299)">&lt;</span><span class="m rs" style="left:99.34px;transform:scaleX(1.0474)">/</span><span class="n" style="left:105.37px;transform:scaleX(1.0345)">N</span><span class="n" style="left:115.34px;transform:scaleX(1.0779)">a</span><span class="n" style="left:123.34px;transform:scaleX(1.1678)">m</span><span class="n" style="left:136.32px;transform:scaleX(1.0707)">e</span><span class="m ch" style="left:145.48px;transform:scaleX(1.0299)">&gt;</span></div>
<div class="ln" style="left:215.23px;top:536.8px"><span class="m ch" style="left:1.22px;transform:scaleX(1.0299)">&lt;</span><span class="n" style="left:11.17px;transform:scaleX(1.0663)">D</span><span class="n" style="left:21.45px;transform:scaleX(1.2306)">i</span><span class="n" style="left:25.11px;transform:scaleX(1.2785)">r</span><span class="m ch" style="left:32.02px;transform:scaleX(1.0299)">&gt;</span><span class="t" style="left:42.20px;transform:scaleX(1.0486)">O</span><span class="t" style="left:53.50px;transform:scaleX(1.1173)">u</span><span class="t" style="left:62.92px;transform:scaleX(1.3107)">t</span><span class="t" style="left:69.06px;transform:scaleX(1.0969)">p</span><span class="t" style="left:78.39px;transform:scaleX(1.1173)">u</span><span class="t" style="left:87.81px;transform:scaleX(1.3107)">t</span><span class="m ch" style="left:94.99px;transform:scaleX(1.0299)">&lt;</span><span class="m rs" style="left:104.97px;transform:scaleX(1.0474)">/</span><span class="n" style="left:111.00px;transform:scaleX(1.0663)">D</span><span class="n" style="left:121.28px;transform:scaleX(1.2306)">i</span><span class="n" style="left:124.93px;transform:scaleX(1.2785)">r</span><span class="m ch" style="left:131.84px;transform:scaleX(1.0299)">&gt;</span></div>
<div class="ln" style="left:188.56px;top:553.0px"><span class="m ch" style="left:1.22px;transform:scaleX(1.0299)">&lt;</span><span class="m rs" style="left:11.20px;transform:scaleX(1.0474)">/</span><span class="n" style="left:17.23px;transform:scaleX(1.0258)">V</span><span class="n" style="left:26.35px;transform:scaleX(1.2306)">i</span><span class="n" style="left:30.00px;transform:scaleX(1.2785)">r</span><span class="n" style="left:35.73px;transform:scaleX(1.4000)">t</span><span class="n" style="left:40.95px;transform:scaleX(1.1372)">u</span><span class="n" style="left:49.39px;transform:scaleX(1.0779)">a</span><span class="n" style="left:57.39px;transform:scaleX(1.2306)">l</span><span class="n" style="left:61.04px;transform:scaleX(1.0345)">N</span><span class="n" style="left:71.01px;transform:scaleX(1.0904)">o</span><span class="n" style="left:79.10px;transform:scaleX(1.1192)">d</span><span class="n" style="left:87.41px;transform:scaleX(1.0707)">e</span><span class="m ch" style="left:96.58px;transform:scaleX(1.0299)">&gt;</span></div>
<i class="d" style="left:175.8px;top:568px"></i>
<div class="ln" style="left:188.56px;top:569.2px"><span class="m ch" style="left:1.22px;transform:scaleX(1.0299)">&lt;</span><span class="n" style="left:11.17px;transform:scaleX(1.0258)">V</span><span class="n" style="left:20.29px;transform:scaleX(1.2306)">i</span><span class="n" style="left:23.95px;transform:scaleX(1.2785)">r</span><span class="n" style="left:29.67px;transform:scaleX(1.4000)">t</span><span class="n" style="left:34.89px;transform:scaleX(1.1372)">u</span><span class="n" style="left:43.33px;transform:scaleX(1.0779)">a</span><span class="n" style="left:51.33px;transform:scaleX(1.2306)">l</span><span class="n" style="left:54.99px;transform:scaleX(1.0345)">N</span><span class="n" style="left:64.96px;transform:scaleX(1.0904)">o</span><span class="n" style="left:73.05px;transform:scaleX(1.1192)">d</span><span class="n" style="left:81.36px;transform:scaleX(1.0707)">e</span><span class="m ch" style="left:90.52px;transform:scaleX(1.0299)">&gt;</span></div>
<div class="ln" style="left:215.23px;top:585.4px"><span class="m ch" style="left:1.22px;transform:scaleX(1.0299)">&lt;</span><span class="n sf" style="left:11.59px;transform:scaleX(1.0504)">I</span><span class="n" style="left:16.79px;transform:scaleX(1.1192)">d</span><span class="m ch" style="left:26.31px;transform:scaleX(1.0299)">&gt;</span><span class="t" style="left:36.45px;transform:scaleX(1.0969)">d</span><span class="t" style="left:45.78px;transform:scaleX(1.2262)">2</span><span class="t" style="left:55.18px;transform:scaleX(1.2130)">f</span><span class="t" style="left:60.85px;transform:scaleX(1.0141)">c</span><span class="t" style="left:68.72px;transform:scaleX(1.2262)">6</span><span class="t" style="left:78.20px;transform:scaleX(1.0969)">d</span><span class="t" style="left:87.52px;transform:scaleX(1.2262)">0</span><span class="t" style="left:97.00px;transform:scaleX(1.2262)">2</span><span class="t" style="left:106.42px;transform:scaleX(1.3797)">-</span><span class="t" style="left:112.88px;transform:scaleX(1.2262)">6</span><span class="t" style="left:122.36px;transform:scaleX(1.0969)">b</span><span class="t" style="left:131.68px;transform:scaleX(1.2262)">9</span><span class="t" style="left:141.16px;transform:scaleX(1.0969)">b</span><span class="t" style="left:150.42px;transform:scaleX(1.3797)">-</span><span class="t" style="left:156.88px;transform:scaleX(1.2262)">4</span><span class="t" style="left:166.36px;transform:scaleX(1.0969)">b</span><span class="t" style="left:175.68px;transform:scaleX(1.2262)">4</span><span class="t" style="left:185.16px;transform:scaleX(1.2262)">1</span><span class="t" style="left:194.58px;transform:scaleX(1.3797)">-</span><span class="t" style="left:201.04px;transform:scaleX(1.2262)">8</span><span class="t" style="left:210.48px;transform:scaleX(1.0141)">c</span><span class="t" style="left:218.36px;transform:scaleX(1.2262)">3</span><span class="t" style="left:227.84px;transform:scaleX(1.2262)">5</span><span class="t" style="left:237.26px;transform:scaleX(1.3797)">-</span><span class="t" style="left:243.72px;transform:scaleX(1.2262)">7</span><span class="t" style="left:253.20px;transform:scaleX(1.2262)">6</span><span class="t" style="left:262.66px;transform:scaleX(1.1451)">e</span><span class="t" style="left:271.52px;transform:scaleX(1.1451)">e</span><span class="t" style="left:280.31px;transform:scaleX(1.2130)">f</span><span class="t" style="left:286.01px;transform:scaleX(1.2262)">5</span><span class="t" style="left:295.49px;transform:scaleX(1.2262)">1</span><span class="t" style="left:304.97px;transform:scaleX(1.2262)">7</span><span class="t" style="left:314.45px;transform:scaleX(1.0969)">b</span><span class="t" style="left:323.76px;transform:scaleX(1.0969)">b</span><span class="t" style="left:333.09px;transform:scaleX(1.2262)">4</span><span class="t" style="left:342.57px;transform:scaleX(1.2262)">7</span><span class="m ch" style="left:353.08px;transform:scaleX(1.0299)">&lt;</span><span class="m rs" style="left:363.06px;transform:scaleX(1.0474)">/</span><span class="n sf" style="left:369.51px;transform:scaleX(1.0504)">I</span><span class="n" style="left:374.70px;transform:scaleX(1.1192)">d</span><span class="m ch" style="left:384.22px;transform:scaleX(1.0299)">&gt;</span></div>
<div class="ln" style="left:215.23px;top:601.6px"><span class="m ch" style="left:1.22px;transform:scaleX(1.0299)">&lt;</span><span class="n" style="left:11.17px;transform:scaleX(1.0345)">N</span><span class="n" style="left:21.15px;transform:scaleX(1.0779)">a</span><span class="n" style="left:29.15px;transform:scaleX(1.1678)">m</span><span class="n" style="left:42.12px;transform:scaleX(1.0707)">e</span><span class="m ch" style="left:51.29px;transform:scaleX(1.0299)">&gt;</span><span class="t sf" style="left:61.78px;transform:scaleX(1.1673)">I</span><span class="t" style="left:68.69px;transform:scaleX(1.1173)">n</span><span class="m ch" style="left:79.22px;transform:scaleX(1.0299)">&lt;</span><span class="m rs" style="left:89.20px;transform:scaleX(1.0474)">/</span><span class="n" style="left:95.22px;transform:scaleX(1.0345)">N</span><span class="n" style="left:105.20px;transform:scaleX(1.0779)">a</span><span class="n" style="left:113.20px;transform:scaleX(1.1678)">m</span><span class="n" style="left:126.17px;transform:scaleX(1.0707)">e</span><span class="m ch" style="left:135.34px;transform:scaleX(1.0299)">&gt;</span></div>
<div class="ln" style="left:215.23px;top:617.8px"><span class="m ch" style="left:1.22px;transform:scaleX(1.0299)">&lt;</span><span class="n" style="left:11.17px;transform:scaleX(1.0663)">D</span><span class="n" style="left:21.45px;transform:scaleX(1.2306)">i</span><span class="n" style="left:25.11px;transform:scaleX(1.2785)">r</span><span class="m ch" style="left:32.02px;transform:scaleX(1.0299)">&gt;</span><span class="t sf" style="left:42.52px;transform:scaleX(1.1673)">I</span><span class="t" style="left:49.43px;transform:scaleX(1.1173)">n</span><span class="t" style="left:58.92px;transform:scaleX(1.0969)">p</span><span class="t" style="left:68.24px;transform:scaleX(1.1173)">u</span><span class="t" style="left:77.67px;transform:scaleX(1.3107)">t</span><span class="m ch" style="left:84.84px;transform:scaleX(1.0299)">&lt;</span><span class="m rs" style="left:94.82px;transform:scaleX(1.0474)">/</span><span class="n" style="left:100.85px;transform:scaleX(1.0663)">D</span><span class="n" style="left:111.13px;transform:scaleX(1.2306)">i</span><span class="n" style="left:114.78px;transform:scaleX(1.2785)">r</span><span class="m ch" style="left:121.70px;transform:scaleX(1.0299)">&gt;</span></div>
<div class="ln" style="left:188.56px;top:634.0px"><span class="m ch" style="left:1.22px;transform:scaleX(1.0299)">&lt;</span><span class="m rs" style="left:11.20px;transform:scaleX(1.0474)">/</span><span class="n" style="left:17.23px;transform:scaleX(1.0258)">V</span><span class="n" style="left:26.35px;transform:scaleX(1.2306)">i</span><span class="n" style="left:30.00px;transform:scaleX(1.2785)">r</span><span class="n" style="left:35.73px;transform:scaleX(1.4000)">t</span><span class="n" style="left:40.95px;transform:scaleX(1.1372)">u</span><span class="n" style="left:49.39px;transform:scaleX(1.0779)">a</span><span class="n" style="left:57.39px;transform:scaleX(1.2306)">l</span><span class="n" style="left:61.04px;transform:scaleX(1.0345)">N</span><span class="n" style="left:71.01px;transform:scaleX(1.0904)">o</span><span class="n" style="left:79.10px;transform:scaleX(1.1192)">d</span><span class="n" style="left:87.41px;transform:scaleX(1.0707)">e</span><span class="m ch" style="left:96.58px;transform:scaleX(1.0299)">&gt;</span></div>
<div class="ln" style="left:161.90px;top:650.2px"><span class="m ch" style="left:1.22px;transform:scaleX(1.0299)">&lt;</span><span class="m rs" style="left:11.20px;transform:scaleX(1.0474)">/</span><span class="n sf" style="left:17.65px;transform:scaleX(1.0504)">I</span><span class="n" style="left:22.84px;transform:scaleX(1.0904)">o</span><span class="n" style="left:30.93px;transform:scaleX(1.0345)">N</span><span class="n" style="left:40.91px;transform:scaleX(1.0904)">o</span><span class="n" style="left:49.00px;transform:scaleX(1.1192)">d</span><span class="n" style="left:57.31px;transform:scaleX(1.0707)">e</span><span class="n" style="left:65.25px;transform:scaleX(1.0412)">s</span><span class="m ch" style="left:73.42px;transform:scaleX(1.0299)">&gt;</span></div>
<div class="ln" style="left:135.23px;top:666.4px"><span class="m ch" style="left:1.22px;transform:scaleX(1.0299)">&lt;</span><span class="m rs" style="left:11.20px;transform:scaleX(1.0474)">/</span><span class="n" style="left:17.23px;transform:scaleX(1.0258)">V</span><span class="n" style="left:26.35px;transform:scaleX(1.2306)">i</span><span class="n" style="left:30.00px;transform:scaleX(1.2785)">r</span><span class="n" style="left:35.73px;transform:scaleX(1.4000)">t</span><span class="n" style="left:40.95px;transform:scaleX(1.1372)">u</span><span class="n" style="left:49.39px;transform:scaleX(1.0779)">a</span><span class="n" style="left:57.39px;transform:scaleX(1.2306)">l</span><span class="n" style="left:61.04px;transform:scaleX(1.0243)">S</span><span class="n" style="left:70.14px;transform:scaleX(1.0904)">o</span><span class="n" style="left:78.24px;transform:scaleX(1.2674)">f</span><span class="n" style="left:82.97px;transform:scaleX(1.4000)">t</span><span class="n" style="left:88.18px;transform:scaleX(1.1313)">w</span><span class="n" style="left:99.09px;transform:scaleX(1.0779)">a</span><span class="n" style="left:107.09px;transform:scaleX(1.2785)">r</span><span class="n" style="left:112.78px;transform:scaleX(1.0707)">e</span><span class="n" style="left:120.73px;transform:scaleX(1.0243)">S</span><span class="n" style="left:129.84px;transform:scaleX(1.0707)">e</span><span class="n" style="left:137.78px;transform:scaleX(1.1372)">n</span><span class="n" style="left:146.22px;transform:scaleX(1.0412)">s</span><span class="n" style="left:153.17px;transform:scaleX(1.0904)">o</span><span class="n" style="left:161.26px;transform:scaleX(1.2785)">r</span><span class="n" style="left:166.96px;transform:scaleX(1.0345)">N</span><span class="n" style="left:176.93px;transform:scaleX(1.0904)">o</span><span class="n" style="left:185.02px;transform:scaleX(1.1192)">d</span><span class="n" style="left:193.33px;transform:scaleX(1.0707)">e</span><span class="n" style="left:201.27px;transform:scaleX(1.0243)">S</span><span class="n" style="left:210.38px;transform:scaleX(1.0707)">e</span><span class="n" style="left:218.36px;transform:scaleX(1.4000)">t</span><span class="n" style="left:223.62px;transform:scaleX(1.4000)">t</span><span class="n" style="left:228.83px;transform:scaleX(1.2306)">i</span><span class="n" style="left:232.49px;transform:scaleX(1.1372)">n</span><span class="n" style="left:240.93px;transform:scaleX(1.1192)">g</span><span class="n" style="left:249.23px;transform:scaleX(1.0412)">s</span><span class="m ch" style="left:257.40px;transform:scaleX(1.0299)">&gt;</span></div>
<i class="d" style="left:122.4px;top:681px"></i>
<div class="ln" style="left:135.23px;top:682.6px"><span class="m ch" style="left:1.22px;transform:scaleX(1.0299)">&lt;</span><span class="n" style="left:11.17px;transform:scaleX(1.0258)">V</span><span class="n" style="left:20.29px;transform:scaleX(1.2306)">i</span><span class="n" style="left:23.95px;transform:scaleX(1.2785)">r</span><span class="n" style="left:29.67px;transform:scaleX(1.4000)">t</span><span class="n" style="left:34.89px;transform:scaleX(1.1372)">u</span><span class="n" style="left:43.33px;transform:scaleX(1.0779)">a</span><span class="n" style="left:51.33px;transform:scaleX(1.2306)">l</span><span class="n" style="left:54.99px;transform:scaleX(1.0243)">S</span><span class="n" style="left:64.09px;transform:scaleX(1.0904)">o</span><span class="n" style="left:72.18px;transform:scaleX(1.2674)">f</span><span class="n" style="left:76.91px;transform:scaleX(1.4000)">t</span><span class="n" style="left:82.13px;transform:scaleX(1.1313)">w</span><span class="n" style="left:93.04px;transform:scaleX(1.0779)">a</span><span class="n" style="left:101.04px;transform:scaleX(1.2785)">r</span><span class="n" style="left:106.73px;transform:scaleX(1.0707)">e</span><span class="n" style="left:114.68px;transform:scaleX(1.0243)">S</span><span class="n" style="left:123.78px;transform:scaleX(1.0707)">e</span><span class="n" style="left:131.73px;transform:scaleX(1.1372)">n</span><span class="n" style="left:140.17px;transform:scaleX(1.0412)">s</span><span class="n" style="left:147.12px;transform:scaleX(1.0904)">o</span><span class="n" style="left:155.21px;transform:scaleX(1.2785)">r</span><span class="n" style="left:160.90px;transform:scaleX(1.0345)">N</span><span class="n" style="left:170.88px;transform:scaleX(1.0904)">o</span><span class="n" style="left:178.97px;transform:scaleX(1.1192)">d</span><span class="n" style="left:187.28px;transform:scaleX(1.0707)">e</span><span class="n" style="left:195.22px;transform:scaleX(1.0243)">S</span><span class="n" style="left:204.33px;transform:scaleX(1.0707)">e</span><span class="n" style="left:212.31px;transform:scaleX(1.4000)">t</span><span class="n" style="left:217.56px;transform:scaleX(1.4000)">t</span><span class="n" style="left:222.78px;transform:scaleX(1.2306)">i</span><span class="n" style="left:226.43px;transform:scaleX(1.1372)">n</span><span class="n" style="left:234.87px;transform:scaleX(1.1192)">g</span><span class="n" style="left:243.18px;transform:scaleX(1.0412)">s</span><span class="m ch" style="left:251.35px;transform:scaleX(1.0299)">&gt;</span></div>
<div class="ln" style="left:161.90px;top:698.8px"><span class="m ch" style="left:1.22px;transform:scaleX(1.0299)">&lt;</span><span class="n" style="left:11.17px;transform:scaleX(1.0345)">N</span><span class="n" style="left:21.15px;transform:scaleX(1.0779)">a</span><span class="n" style="left:29.15px;transform:scaleX(1.1678)">m</span><span class="n" style="left:42.12px;transform:scaleX(1.0707)">e</span><span class="m ch" style="left:51.29px;transform:scaleX(1.0299)">&gt;</span><span class="t" style="left:61.43px;transform:scaleX(0.9745)">C</span><span class="t" style="left:71.21px;transform:scaleX(1.0781)">o</span><span class="t" style="left:80.32px;transform:scaleX(1.2263)">r</span><span class="t" style="left:86.99px;transform:scaleX(1.1451)">e</span><span class="t" style="left:100.62px;transform:scaleX(1.4500)">(</span><span class="t" style="left:107.65px;transform:scaleX(1.0703)">T</span><span class="t" style="left:116.71px;transform:scaleX(1.0141)">c</span><span class="t" style="left:124.52px;transform:scaleX(1.3107)">t</span><span class="t" style="left:130.57px;transform:scaleX(1.1821)">l</span><span class="t bs" style="left:136.33px;transform:scaleX(1.4852)">/</span><span class="t" style="left:144.40px;transform:scaleX(1.0703)">T</span><span class="t" style="left:153.50px;transform:scaleX(1.0969)">d</span><span class="t" style="left:162.73px;transform:scaleX(1.1821)">i</span><span class="t" style="left:167.37px;transform:scaleX(1.1451)">e</span><span class="t" style="left:176.44px;transform:scaleX(1.4500)">)</span><span class="m ch" style="left:184.51px;transform:scaleX(1.0299)">&lt;</span><span class="m rs" style="left:194.49px;transform:scaleX(1.0474)">/</span><span class="n" style="left:200.51px;transform:scaleX(1.0345)">N</span><span class="n" style="left:210.49px;transform:scaleX(1.0779)">a</span><span class="n" style="left:218.49px;transform:scaleX(1.1678)">m</span><span class="n" style="left:231.46px;transform:scaleX(1.0707)">e</span><span class="m ch" style="left:240.63px;transform:scaleX(1.0299)">&gt;</span></div>
<i class="d" style="left:149.1px;top:714px"></i>
<div class="ln" style="left:161.90px;top:715.0px"><span class="m ch" style="left:1.22px;transform:scaleX(1.0299)">&lt;</span><span class="n" style="left:11.17px;transform:scaleX(0.9043)">P</span><span class="n" style="left:19.21px;transform:scaleX(1.0779)">a</span><span class="n" style="left:27.21px;transform:scaleX(1.2785)">r</span><span class="n" style="left:32.91px;transform:scaleX(1.0779)">a</span><span class="n" style="left:40.91px;transform:scaleX(1.1678)">m</span><span class="n" style="left:53.88px;transform:scaleX(1.0707)">e</span><span class="n" style="left:61.86px;transform:scaleX(1.4000)">t</span><span class="n" style="left:67.08px;transform:scaleX(1.0707)">e</span><span class="n" style="left:75.02px;transform:scaleX(1.2785)">r</span><span class="n" style="left:80.72px;transform:scaleX(1.0412)">s</span><span class="m ch" style="left:88.88px;transform:scaleX(1.0299)">&gt;</span></div>
<i class="d" style="left:175.8px;top:730px"></i>
<div class="ln" style="left:188.56px;top:731.2px"><span class="m ch" style="left:1.22px;transform:scaleX(1.0299)">&lt;</span><span class="n" style="left:11.17px;transform:scaleX(1.0258)">V</span><span class="n" style="left:20.29px;transform:scaleX(1.2306)">i</span><span class="n" style="left:23.95px;transform:scaleX(1.2785)">r</span><span class="n" style="left:29.67px;transform:scaleX(1.4000)">t</span><span class="n" style="left:34.89px;transform:scaleX(1.1372)">u</span><span class="n" style="left:43.33px;transform:scaleX(1.0779)">a</span><span class="n" style="left:51.33px;transform:scaleX(1.2306)">l</span><span class="n" style="left:54.99px;transform:scaleX(1.0345)">N</span><span class="n" style="left:64.96px;transform:scaleX(1.0904)">o</span><span class="n" style="left:73.05px;transform:scaleX(1.1192)">d</span><span class="n" style="left:81.36px;transform:scaleX(1.0707)">e</span><span class="n" style="left:89.30px;transform:scaleX(0.9043)">P</span><span class="n" style="left:97.34px;transform:scaleX(1.0779)">a</span><span class="n" style="left:105.34px;transform:scaleX(1.2785)">r</span><span class="n" style="left:111.04px;transform:scaleX(1.0779)">a</span><span class="n" style="left:119.04px;transform:scaleX(1.1678)">m</span><span class="n" style="left:132.01px;transform:scaleX(1.0707)">e</span><span class="n" style="left:139.99px;transform:scaleX(1.4000)">t</span><span class="n" style="left:145.21px;transform:scaleX(1.0707)">e</span><span class="n" style="left:153.16px;transform:scaleX(1.2785)">r</span><span class="m ch" style="left:160.07px;transform:scaleX(1.0299)">&gt;</span></div>
<div class="ln" style="left:215.23px;top:747.4px"><span class="m ch" style="left:1.22px;transform:scaleX(1.0299)">&lt;</span><span class="n" style="left:11.17px;transform:scaleX(1.0345)">N</span><span class="n" style="left:21.15px;transform:scaleX(1.0779)">a</span><span class="n" style="left:29.15px;transform:scaleX(1.1678)">m</span><span class="n" style="left:42.12px;transform:scaleX(1.0707)">e</span><span class="m ch" style="left:51.29px;transform:scaleX(1.0299)">&gt;</span><span class="t" style="left:61.42px;transform:scaleX(1.0969)">d</span><span class="t" style="left:70.74px;transform:scaleX(1.1451)">e</span><span class="t" style="left:79.58px;transform:scaleX(1.1210)">v</span><span class="t" style="left:88.17px;transform:scaleX(1.1821)">i</span><span class="t" style="left:92.79px;transform:scaleX(1.0141)">c</span><span class="t" style="left:100.65px;transform:scaleX(1.1451)">e</span><span class="m ch" style="left:110.55px;transform:scaleX(1.0299)">&lt;</span><span class="m rs" style="left:120.53px;transform:scaleX(1.0474)">/</span><span class="n" style="left:126.56px;transform:scaleX(1.0345)">N</span><span class="n" style="left:136.53px;transform:scaleX(1.0779)">a</span><span class="n" style="left:144.53px;transform:scaleX(1.1678)">m</span><span class="n" style="left:157.50px;transform:scaleX(1.0707)">e</span><span class="m ch" style="left:166.67px;transform:scaleX(1.0299)">&gt;</span></div>
<div class="ln" style="left:215.23px;top:763.6px"><span class="m ch" style="left:1.22px;transform:scaleX(1.0299)">&lt;</span><span class="n" style="left:11.17px;transform:scaleX(1.0258)">V</span><span class="n" style="left:20.29px;transform:scaleX(1.0779)">a</span><span class="n" style="left:28.29px;transform:scaleX(1.2306)">l</span><span class="n" style="left:31.95px;transform:scaleX(1.1372)">u</span><span class="n" style="left:40.39px;transform:scaleX(1.0707)">e</span><span class="m ch" style="left:49.55px;transform:scaleX(1.0299)">&gt;</span><span class="t" style="left:59.69px;transform:scaleX(1.2262)">0</span><span class="m ch" style="left:70.21px;transform:scaleX(1.0299)">&lt;</span><span class="m rs" style="left:80.18px;transform:scaleX(1.0474)">/</span><span class="n" style="left:86.21px;transform:scaleX(1.0258)">V</span><span class="n" style="left:95.33px;transform:scaleX(1.0779)">a</span><span class="n" style="left:103.33px;transform:scaleX(1.2306)">l</span><span class="n" style="left:106.98px;transform:scaleX(1.1372)">u</span><span class="n" style="left:115.42px;transform:scaleX(1.0707)">e</span><span class="m ch" style="left:124.59px;transform:scaleX(1.0299)">&gt;</span></div>
<div class="ln" style="left:215.23px;top:779.8px"><span class="m ch" style="left:1.22px;transform:scaleX(1.0299)">&lt;</span><span class="n" style="left:11.17px;transform:scaleX(1.0070)">T</span><span class="n" style="left:19.39px;transform:scaleX(1.0707)">e</span><span class="n" style="left:27.33px;transform:scaleX(1.1830)">x</span><span class="n" style="left:35.26px;transform:scaleX(1.4000)">t</span><span class="m ch" style="left:41.70px;transform:scaleX(1.0299)">&gt;</span><span class="t" style="left:51.81px;transform:scaleX(1.0227)">s</span><span class="t" style="left:59.74px;transform:scaleX(1.1451)">e</span><span class="t" style="left:68.54px;transform:scaleX(1.2263)">r</span><span class="t" style="left:75.21px;transform:scaleX(1.1210)">v</span><span class="t" style="left:83.80px;transform:scaleX(1.1821)">i</span><span class="t" style="left:88.42px;transform:scaleX(1.0141)">c</span><span class="t" style="left:96.28px;transform:scaleX(1.1451)">e</span><span class="t" style="left:105.15px;transform:scaleX(1.2262)">_</span><span class="t" style="left:114.62px;transform:scaleX(1.0969)">d</span><span class="t" style="left:123.94px;transform:scaleX(1.1520)">a</span><span class="t" style="left:132.78px;transform:scaleX(1.3107)">t</span><span class="t" style="left:138.92px;transform:scaleX(1.1520)">a</span><span class="m ch" style="left:148.87px;transform:scaleX(1.0299)">&lt;</span><span class="m rs" style="left:158.85px;transform:scaleX(1.0474)">/</span><span class="n" style="left:164.88px;transform:scaleX(1.0070)">T</span><span class="n" style="left:173.09px;transform:scaleX(1.0707)">e</span><span class="n" style="left:181.04px;transform:scaleX(1.1830)">x</span><span class="n" style="left:188.96px;transform:scaleX(1.4000)">t</span><span class="m ch" style="left:195.40px;transform:scaleX(1.0299)">&gt;</span></div>
<div class="ln" style="left:188.56px;top:796.0px"><span class="m ch" style="left:1.22px;transform:scaleX(1.0299)">&lt;</span><span class="m rs" style="left:11.20px;transform:scaleX(1.0474)">/</span><span class="n" style="left:17.23px;transform:scaleX(1.0258)">V</span><span class="n" style="left:26.35px;transform:scaleX(1.2306)">i</span><span class="n" style="left:30.00px;transform:scaleX(1.2785)">r</span><span class="n" style="left:35.73px;transform:scaleX(1.4000)">t</span><span class="n" style="left:40.95px;transform:scaleX(1.1372)">u</span><span class="n" style="left:49.39px;transform:scaleX(1.0779)">a</span><span class="n" style="left:57.39px;transform:scaleX(1.2306)">l</span><span class="n" style="left:61.04px;transform:scaleX(1.0345)">N</span><span class="n" style="left:71.01px;transform:scaleX(1.0904)">o</span><span class="n" style="left:79.10px;transform:scaleX(1.1192)">d</span><span class="n" style="left:87.41px;transform:scaleX(1.0707)">e</span><span class="n" style="left:95.36px;transform:scaleX(0.9043)">P</span><span class="n" style="left:103.40px;transform:scaleX(1.0779)">a</span><span class="n" style="left:111.40px;transform:scaleX(1.2785)">r</span><span class="n" style="left:117.09px;transform:scaleX(1.0779)">a</span><span class="n" style="left:125.09px;transform:scaleX(1.1678)">m</span><span class="n" style="left:138.06px;transform:scaleX(1.0707)">e</span><span class="n" style="left:146.04px;transform:scaleX(1.4000)">t</span><span class="n" style="left:151.26px;transform:scaleX(1.0707)">e</span><span class="n" style="left:159.21px;transform:scaleX(1.2785)">r</span><span class="m ch" style="left:166.12px;transform:scaleX(1.0299)">&gt;</span></div>
<i class="d" style="left:175.8px;top:811px"></i>
<div class="ln" style="left:188.56px;top:812.2px"><span class="m ch" style="left:1.22px;transform:scaleX(1.0299)">&lt;</span><span class="n" style="left:11.17px;transform:scaleX(1.0258)">V</span><span class="n" style="left:20.29px;transform:scaleX(1.2306)">i</span><span class="n" style="left:23.95px;transform:scaleX(1.2785)">r</span><span class="n" style="left:29.67px;transform:scaleX(1.4000)">t</span><span class="n" style="left:34.89px;transform:scaleX(1.1372)">u</span><span class="n" style="left:43.33px;transform:scaleX(1.0779)">a</span><span class="n" style="left:51.33px;transform:scaleX(1.2306)">l</span><span class="n" style="left:54.99px;transform:scaleX(1.0345)">N</span><span class="n" style="left:64.96px;transform:scaleX(1.0904)">o</span><span class="n" style="left:73.05px;transform:scaleX(1.1192)">d</span><span class="n" style="left:81.36px;transform:scaleX(1.0707)">e</span><span class="n" style="left:89.30px;transform:scaleX(0.9043)">P</span><span class="n" style="left:97.34px;transform:scaleX(1.0779)">a</span><span class="n" style="left:105.34px;transform:scaleX(1.2785)">r</span><span class="n" style="left:111.04px;transform:scaleX(1.0779)">a</span><span class="n" style="left:119.04px;transform:scaleX(1.1678)">m</span><span class="n" style="left:132.01px;transform:scaleX(1.0707)">e</span><span class="n" style="left:139.99px;transform:scaleX(1.4000)">t</span><span class="n" style="left:145.21px;transform:scaleX(1.0707)">e</span><span class="n" style="left:153.16px;transform:scaleX(1.2785)">r</span><span class="m ch" style="left:160.07px;transform:scaleX(1.0299)">&gt;</span></div>
<div class="ln" style="left:215.23px;top:828.4px"><span class="m ch" style="left:1.22px;transform:scaleX(1.0299)">&lt;</span><span class="n" style="left:11.17px;transform:scaleX(1.0345)">N</span><span class="n" style="left:21.15px;transform:scaleX(1.0779)">a</span><span class="n" style="left:29.15px;transform:scaleX(1.1678)">m</span><span class="n" style="left:42.12px;transform:scaleX(1.0707)">e</span><span class="m ch" style="left:51.29px;transform:scaleX(1.0299)">&gt;</span><span class="t" style="left:61.40px;transform:scaleX(1.0227)">s</span><span class="t" style="left:69.32px;transform:scaleX(1.1451)">e</span><span class="t" style="left:78.13px;transform:scaleX(1.2263)">r</span><span class="t" style="left:84.72px;transform:scaleX(1.1821)">i</span><span class="t" style="left:89.36px;transform:scaleX(1.1520)">a</span><span class="t" style="left:98.18px;transform:scaleX(1.1821)">l</span><span class="m ch" style="left:103.87px;transform:scaleX(1.0299)">&lt;</span><span class="m rs" style="left:113.85px;transform:scaleX(1.0474)">/</span><span class="n" style="left:119.88px;transform:scaleX(1.0345)">N</span><span class="n" style="left:129.85px;transform:scaleX(1.0779)">a</span><span class="n" style="left:137.85px;transform:scaleX(1.1678)">m</span><span class="n" style="left:150.82px;transform:scaleX(1.0707)">e</span><span class="m ch" style="left:159.99px;transform:scaleX(1.0299)">&gt;</span></div>
<div class="ln" style="left:215.23px;top:844.6px"><span class="m ch" style="left:1.22px;transform:scaleX(1.0299)">&lt;</span><span class="n" style="left:11.17px;transform:scaleX(1.0258)">V</span><span class="n" style="left:20.29px;transform:scaleX(1.0779)">a</span><span class="n" style="left:28.29px;transform:scaleX(1.2306)">l</span><span class="n" style="left:31.95px;transform:scaleX(1.1372)">u</span><span class="n" style="left:40.39px;transform:scaleX(1.0707)">e</span><span class="m ch" style="left:49.55px;transform:scaleX(1.0299)">&gt;</span><span class="t" style="left:59.69px;transform:scaleX(1.2262)">0</span><span class="m ch" style="left:70.21px;transform:scaleX(1.0299)">&lt;</span><span class="m rs" style="left:80.18px;transform:scaleX(1.0474)">/</span><span class="n" style="left:86.21px;transform:scaleX(1.0258)">V</span><span class="n" style="left:95.33px;transform:scaleX(1.0779)">a</span><span class="n" style="left:103.33px;transform:scaleX(1.2306)">l</span><span class="n" style="left:106.98px;transform:scaleX(1.1372)">u</span><span class="n" style="left:115.42px;transform:scaleX(1.0707)">e</span><span class="m ch" style="left:124.59px;transform:scaleX(1.0299)">&gt;</span></div>
<div class="ln" style="left:215.23px;top:860.8px"><span class="m ch" style="left:1.22px;transform:scaleX(1.0299)">&lt;</span><span class="n" style="left:11.17px;transform:scaleX(1.0070)">T</span><span class="n" style="left:19.39px;transform:scaleX(1.0707)">e</span><span class="n" style="left:27.33px;transform:scaleX(1.1830)">x</span><span class="n" style="left:35.26px;transform:scaleX(1.4000)">t</span><span class="m ch" style="left:41.70px;transform:scaleX(1.0299)">&gt;</span><span class="t" style="left:51.84px;transform:scaleX(1.2262)">1</span><span class="m ch" style="left:62.35px;transform:scaleX(1.0299)">&lt;</span><span class="m rs" style="left:72.33px;transform:scaleX(1.0474)">/</span><span class="n" style="left:78.36px;transform:scaleX(1.0070)">T</span><span class="n" style="left:86.57px;transform:scaleX(1.0707)">e</span><span class="n" style="left:94.52px;transform:scaleX(1.1830)">x</span><span class="n" style="left:102.45px;transform:scaleX(1.4000)">t</span><span class="m ch" style="left:108.88px;transform:scaleX(1.0299)">&gt;</span></div>
<div class="ln" style="left:188.56px;top:877.0px"><span class="m ch" style="left:1.22px;transform:scaleX(1.0299)">&lt;</span><span class="m rs" style="left:11.20px;transform:scaleX(1.0474)">/</span><span class="n" style="left:17.23px;transform:scaleX(1.0258)">V</span><span class="n" style="left:26.35px;transform:scaleX(1.2306)">i</span><span class="n" style="left:30.00px;transform:scaleX(1.2785)">r</span><span class="n" style="left:35.73px;transform:scaleX(1.4000)">t</span><span class="n" style="left:40.95px;transform:scaleX(1.1372)">u</span><span class="n" style="left:49.39px;transform:scaleX(1.0779)">a</span><span class="n" style="left:57.39px;transform:scaleX(1.2306)">l</span><span class="n" style="left:61.04px;transform:scaleX(1.0345)">N</span><span class="n" style="left:71.01px;transform:scaleX(1.0904)">o</span><span class="n" style="left:79.10px;transform:scaleX(1.1192)">d</span><span class="n" style="left:87.41px;transform:scaleX(1.0707)">e</span><span class="n" style="left:95.36px;transform:scaleX(0.9043)">P</span><span class="n" style="left:103.40px;transform:scaleX(1.0779)">a</span><span class="n" style="left:111.40px;transform:scaleX(1.2785)">r</span><span class="n" style="left:117.09px;transform:scaleX(1.0779)">a</span><span class="n" style="left:125.09px;transform:scaleX(1.1678)">m</span><span class="n" style="left:138.06px;transform:scaleX(1.0707)">e</span><span class="n" style="left:146.04px;transform:scaleX(1.4000)">t</span><span class="n" style="left:151.26px;transform:scaleX(1.0707)">e</span><span class="n" style="left:159.21px;transform:scaleX(1.2785)">r</span><span class="m ch" style="left:166.12px;transform:scaleX(1.0299)">&gt;</span></div>
<i class="d" style="left:175.8px;top:892px"></i>
<div class="ln" style="left:188.56px;top:893.2px"><span class="m ch" style="left:1.22px;transform:scaleX(1.0299)">&lt;</span><span class="n" style="left:11.17px;transform:scaleX(1.0258)">V</span><span class="n" style="left:20.29px;transform:scaleX(1.2306)">i</span><span class="n" style="left:23.95px;transform:scaleX(1.2785)">r</span><span class="n" style="left:29.67px;transform:scaleX(1.4000)">t</span><span class="n" style="left:34.89px;transform:scaleX(1.1372)">u</span><span class="n" style="left:43.33px;transform:scaleX(1.0779)">a</span><span class="n" style="left:51.33px;transform:scaleX(1.2306)">l</span><span class="n" style="left:54.99px;transform:scaleX(1.0345)">N</span><span class="n" style="left:64.96px;transform:scaleX(1.0904)">o</span><span class="n" style="left:73.05px;transform:scaleX(1.1192)">d</span><span class="n" style="left:81.36px;transform:scaleX(1.0707)">e</span><span class="n" style="left:89.30px;transform:scaleX(0.9043)">P</span><span class="n" style="left:97.34px;transform:scaleX(1.0779)">a</span><span class="n" style="left:105.34px;transform:scaleX(1.2785)">r</span><span class="n" style="left:111.04px;transform:scaleX(1.0779)">a</span><span class="n" style="left:119.04px;transform:scaleX(1.1678)">m</span><span class="n" style="left:132.01px;transform:scaleX(1.0707)">e</span><span class="n" style="left:139.99px;transform:scaleX(1.4000)">t</span><span class="n" style="left:145.21px;transform:scaleX(1.0707)">e</span><span class="n" style="left:153.16px;transform:scaleX(1.2785)">r</span><span class="m ch" style="left:160.07px;transform:scaleX(1.0299)">&gt;</span></div>
</div>
</body></html>
